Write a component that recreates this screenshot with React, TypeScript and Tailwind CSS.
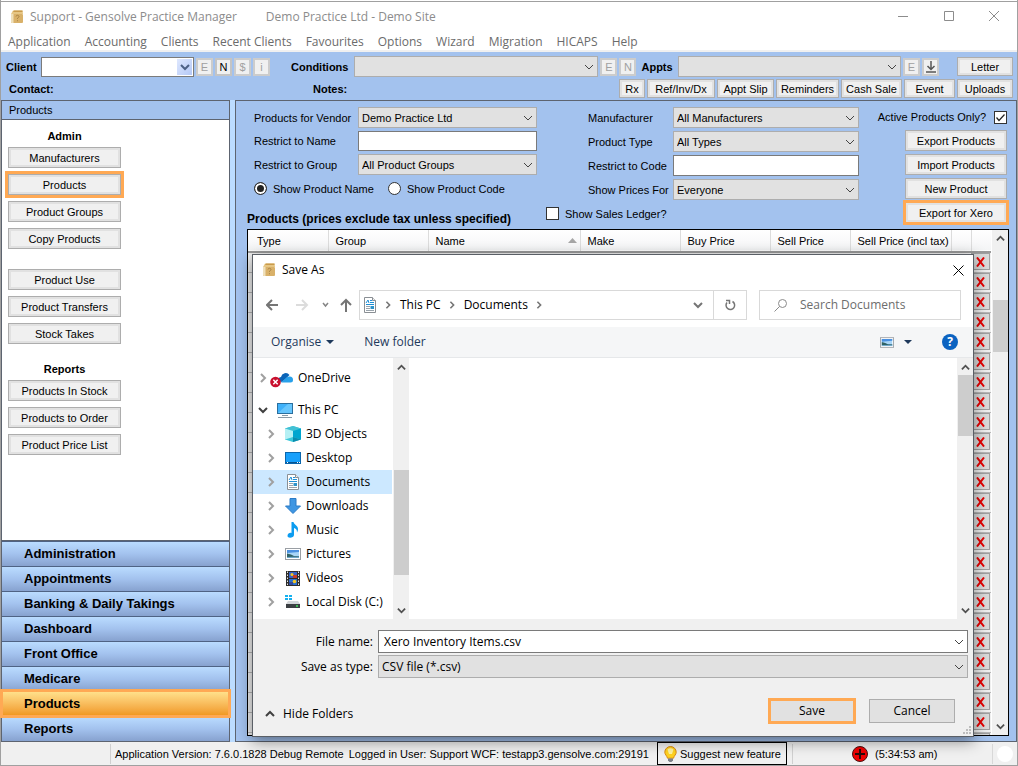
import { useState } from "react";
import type { ReactNode } from "react";
import clsx from "clsx";

const MENU = ["Application", "Accounting", "Clients", "Recent Clients", "Favourites", "Options", "Wizard", "Migration", "HICAPS", "Help"];

const SIDE_GROUPS = [
  { title: "Admin", items: ["Manufacturers", "Products", "Product Groups", "Copy Products"] },
  { items: ["Product Use", "Product Transfers", "Stock Takes"] },
  { title: "Reports", items: ["Products In Stock", "Products to Order", "Product Price List"] },
];

const NAV = ["Administration", "Appointments", "Banking & Daily Takings", "Dashboard", "Front Office", "Medicare", "Products", "Reports"];

const COLUMNS = [
  { label: "Type", width: "w-[80px]" },
  { label: "Group", width: "w-[100px]" },
  { label: "Name", width: "w-[152px]", sorted: true },
  { label: "Make", width: "w-[100px]" },
  { label: "Buy Price", width: "w-[90px]" },
  { label: "Sell Price", width: "w-[80px]" },
  { label: "Sell Price (incl tax)", width: "w-[101px]" },
  { label: "", width: "w-[20px]" },
  { label: "", width: "w-[20px]" },
];

const ROWS = Array.from({ length: 25 }, (_, i) => i);

const CHEVRONS = {
  down: "M1 3l4 4 4-4",
  up: "M1 7l4-4 4 4",
  right: "M3 1l4 4-4 4",
};

function Chevron({
  className = "",
  size = "size-[10px]",
  dir = "down",
  weight = 1,
}: {
  className?: string;
  size?: string;
  dir?: "down" | "up" | "right";
  weight?: number;
}) {
  return (
    <svg viewBox="0 0 10 10" className={clsx("shrink-0", size, className)} fill="none" stroke="currentColor" strokeWidth={weight}>
      <path d={CHEVRONS[dir]} />
    </svg>
  );
}

function Button({ children, className = "", highlight = false }: { children: ReactNode; className?: string; highlight?: boolean }) {
  return (
    <button
      type="button"
      className={clsx(
        "shrink-0 whitespace-nowrap border border-[#adadad] bg-[#f0f0f0] text-center shadow-[inset_0_0_0_2px_#e1e1e1]",
        highlight && "outline-3 outline-[#ffa954]",
        className
      )}
    >
      {children}
    </button>
  );
}

function MiniButton({ children, label, active = false }: { children: ReactNode; label: string; active?: boolean }) {
  return (
    <button
      type="button"
      aria-label={label}
      disabled={!active}
      className={clsx(
        "flex h-[18px] w-[17px] shrink-0 items-center justify-center border-2 bg-[#f0f0f0]",
        active ? "border-[#c4c4c4] text-black" : "border-[#cccccc] text-[#a0a0a0]"
      )}
    >
      {children}
    </button>
  );
}

function Combo({ id, options, className = "h-[21px]" }: { id: string; options: string[]; className?: string }) {
  return (
    <div className={clsx("relative", className)}>
      <select id={id} className="block size-full appearance-none border border-[#adadad] bg-[#e1e1e1] px-[3px]">
        {options.map((o) => (
          <option key={o}>{o}</option>
        ))}
      </select>
      <Chevron className="pointer-events-none absolute right-[4px] top-1/2 -translate-y-1/2 text-[#444]" />
    </div>
  );
}

function BoxIcon() {
  return (
    <svg viewBox="0 0 14 14" className="size-[14px] shrink-0">
      <path d="M1 4l2-3.500h9.500L13 4z" fill="#e6c684" />
      <path d="M4 .5h8.500v1.500H3z" fill="#c99b4c" />
      <rect x="1" y="4" width="12" height="9" rx="1" fill="#d9b169" />
      <path d="M1 4h2.500v9H2a1 1 0 01-1-1z" fill="#efe0bb" />
      <path d="M6 6.500q.2-1.200 1.500-1.200t1.500 1.200q0 .8-1.500 1.700v.8M7.500 10.200v1" stroke="#a98446" fill="none" />
    </svg>
  );
}

function DocumentIcon() {
  return (
    <svg viewBox="0 0 16 16" className="size-4 shrink-0">
      <path d="M2.500 .5h8l3 3v12h-11z" fill="#fff" stroke="#8a8f94" />
      <path d="M10.500 .5v3h3" fill="#eee" stroke="#8a8f94" />
      <path d="M4 6l2-3 1 3M8 3.500h2M8 5.500h4M4 7.500h8" stroke="#1f8fd6" fill="none" />
      <path d="M4 9.500h4M4 11.500h4M4 13.500h8" stroke="#9aa3ab" />
      <rect x="8.500" y="9" width="3.500" height="3" fill="#2e93c9" />
    </svg>
  );
}

function PictureIcon({ className = "h-3 w-4" }: { className?: string }) {
  return (
    <svg viewBox="0 0 16 12" className={clsx("shrink-0", className)}>
      <rect x=".5" y=".5" width="15" height="11" fill="#fff" stroke="#9a9fa4" />
      <rect x="2" y="2" width="12" height="8" fill="#a9d6f7" />
      <path d="M2 2h12v2L2 5z" fill="#4a90e0" />
      <path d="M2 5.500l4 1 3 1.500h5v1H2z" fill="#2f6266" />
      <path d="M2 9l12-.5V10H2z" fill="#6fa8c9" />
    </svg>
  );
}

function TreeIcon({ name }: { name: string }) {
  if (name === "Documents") return <DocumentIcon />;
  if (name === "Pictures") return <PictureIcon />;
  return (
    <svg viewBox="0 0 16 16" className="size-4 shrink-0 overflow-visible">
      {name === "OneDrive" && (
        <>
          <path d="M1 11a3.500 3.500 0 013-4 4.800 4.800 0 018.500-2l-4 4L5 12z" fill="#0a64b8" />
          <path d="M4 12.500l5-4.500a4 4 0 013.500-1.500A3.400 3.400 0 0116 10q0 2.500-2.500 2.500z" fill="#28a0ea" />
          <circle cx="-1.500" cy="12" r="5.300" fill="#c8102e" />
          <path d="M-3.700 9.800l4.400 4.400M.7 9.800l-4.400 4.400" stroke="#fff" strokeWidth="1.500" />
        </>
      )}
      {name === "This PC" && (
        <>
          <rect x=".5" y="1.500" width="15" height="10" fill="#3fb1fa" stroke="#2b6f9e" />
          <path d="M1 11L11 2h4v9z" fill="#67c6fd" />
          <path d="M5 13.500h6M1 15.500h14" stroke="#8a9aa6" />
        </>
      )}
      {name === "3D Objects" && (
        <>
          <path d="M0 2.500L8 0l8 2.500v11L8 16l-8-2.500z" fill="#3cc8da" />
          <path d="M0 2.500L8 0l8 2.500L8 5z" fill="#42c0d4" />
          <path d="M0 2.500L8 5v6l-8 2.500z" fill="#b5f0f4" />
          <path d="M16 2.500L8 5v6l8 2.500z" fill="#00a6cf" />
          <path d="M8 11l8 2.500L8 16z" fill="#0b8cae" />
        </>
      )}
      {name === "Desktop" && (
        <>
          <rect x=".5" y="2.500" width="15" height="11" fill="#18a0fb" stroke="#0a66ad" />
          <path d="M1 12.500h14" stroke="#0b5590" />
          <path d="M2 12.500h1M12 12.500h1M14 12.500h1" stroke="#fff" />
        </>
      )}
      {name === "Downloads" && <path d="M5 .5h6V8h4.500L8 15.500.5 8H5z" fill="#3f96e2" stroke="#2a7bc6" />}
      {name === "Music" && (
        <path d="M6.500 0h2c.5 3 4.500 3.500 4.500 7 0 1.500-.5 2.500-1 3.500.2-3-1.500-4-3-4.500v7c0 3-6.500 4-6.500.8 0-2.300 2.500-3.300 4-2.800z" fill="#0c9cf0" />
      )}
      {name === "Videos" && (
        <>
          <rect x="1" y="1" width="14" height="15" fill="#2c2c2c" />
          <path d="M2.500 1.500v14M13.500 1.500v14" stroke="#e8e8e8" strokeDasharray="1.500 1.500" />
          <rect x="4" y="2" width="8" height="6" fill="#3561c4" />
          <rect x="4" y="9" width="8" height="6" fill="#2b6fce" />
          <circle cx="7" cy="4.500" r="1.500" fill="#f3c623" />
          <path d="M8 5h4v3H8z" fill="#c43c28" />
          <circle cx="9.500" cy="11.500" r="1.800" fill="#f3c623" />
          <path d="M4 12h4v3H4z" fill="#344a9a" />
        </>
      )}
      {name === "Local Disk (C:)" && (
        <>
          <path d="M0 1h3v2H0zM4 1h3v2H4zM0 4h3v2H0zM4 4h3v2H4z" fill="#15b1f0" />
          <path d="M3 7h10l2 3H1z" fill="#d3d6d9" />
          <rect x="1" y="10" width="14" height="4" fill="#3b3f42" />
          <path d="M11 12h2" stroke="#3ee05a" strokeWidth="1.500" />
        </>
      )}
    </svg>
  );
}

function TopBar() {
  return (
    <div className="bg-[#a3c2ee] pb-[2px] pl-[5px] pr-[4px] pt-[4px]">
      <div className="flex h-[21px] items-center">
        <label htmlFor="client" className="w-[35px] shrink-0 font-bold">Client</label>
        <div className="relative h-[20px] w-[153px] shrink-0">
          <input id="client" className="block size-full border border-[#7b7b7b] bg-white px-1" />
          <span className="pointer-events-none absolute inset-y-[2px] right-[2px] flex w-[15px] items-center justify-center bg-linear-to-br from-[#dfe8fe] to-[#b4c8f6] text-[#4d6185]">
            <Chevron weight={2} />
          </span>
        </div>
        <div className="ml-[2px] flex gap-[2px]">
          <MiniButton label="Edit client">E</MiniButton>
          <MiniButton label="New client" active>N</MiniButton>
          <MiniButton label="Client account">$</MiniButton>
          <MiniButton label="Client info">i</MiniButton>
        </div>
        <label htmlFor="conditions" className="ml-[21px] w-[63px] shrink-0 font-bold">Conditions</label>
        <Combo id="conditions" options={[""]} className="h-[21px] min-w-0 grow basis-[245px]" />
        <div className="ml-[2px] flex gap-[2px]">
          <MiniButton label="Edit condition">E</MiniButton>
          <MiniButton label="New condition">N</MiniButton>
        </div>
        <label htmlFor="appts" className="ml-[5px] w-[37px] shrink-0 font-bold">Appts</label>
        <Combo id="appts" options={[""]} className="h-[21px] min-w-0 grow basis-[223px]" />
        <div className="ml-[2px] flex gap-[2px]">
          <MiniButton label="Edit appointment">E</MiniButton>
          <MiniButton label="Download">
            <svg viewBox="0 0 12 12" className="size-3 shrink-0" fill="none" stroke="#555" strokeWidth="1.500">
              <path d="M6 0v8M2.500 5L6 8.500 9.500 5M1 11h10" />
            </svg>
          </MiniButton>
        </div>
        <Button className="ml-[18px] h-[19px] w-[56px]">Letter</Button>
      </div>
      <div className="mt-[2px] flex h-[19px] items-center">
        <strong className="ml-[3px] w-[304px] shrink-0">Contact:</strong>
        <strong>Notes:</strong>
        <div className="ml-auto flex gap-[2px]">
          <Button className="h-[19px] w-[26px]">Rx</Button>
          <Button className="h-[19px] w-[68px]">Ref/Inv/Dx</Button>
          <Button className="h-[19px] w-[57px]">Appt Slip</Button>
          <Button className="h-[19px] w-[63px]">Reminders</Button>
          <Button className="h-[19px] w-[61px]">Cash Sale</Button>
          <Button className="h-[19px] w-[51px]">Event</Button>
          <Button className="h-[19px] w-[56px]">Uploads</Button>
        </div>
      </div>
    </div>
  );
}

function Sidebar() {
  return (
    <aside className="flex w-[229px] shrink-0 flex-col border border-[#5d6470] bg-white">
      <h2 className="h-[19px] border-b border-[#5d6470] bg-[#a3c2ee] pl-[7px] leading-[19px]">Products</h2>
      <div className="min-h-0 flex-1 overflow-hidden pl-[6px] pt-[7px]">
        {SIDE_GROUPS.map((group, i) => (
          <div key={i} className={clsx("flex w-[113px] flex-col gap-[6px]", i === 1 && "mt-[20px]", i === 2 && "mt-[16px]")}>
            {group.title && <h3 className="-mb-[4px] h-[18px] text-center font-bold leading-[18px]">{group.title}</h3>}
            {group.items.map((item) => (
              <Button key={item} className="h-[21px] w-full" highlight={item === "Products"}>
                {item}
              </Button>
            ))}
          </div>
        ))}
      </div>
      <nav className="border-t border-[#5d6470]">
        {NAV.map((item) => (
          <button
            key={item}
            type="button"
            className={clsx(
              "block h-[25px] w-full border-t border-[#4f6384] pl-[22px] text-left text-[13px] font-bold",
              item === "Products"
                ? "relative bg-linear-to-b from-[#ffe08a] to-[#ef9618] outline-3 -outline-offset-1 outline-[#ffa954]"
                : "bg-linear-to-b from-[#badcff] via-[#a3c2ee] to-[#87a2cf]"
            )}
          >
            {item}
          </button>
        ))}
      </nav>
    </aside>
  );
}

function Filters() {
  const [activeOnly, setActiveOnly] = useState(true);
  const radio = "size-[13px] appearance-none rounded-full border border-[#333] bg-white checked:bg-[#222] checked:shadow-[inset_0_0_0_2px_white]";
  return (
    <div className="flex items-start">
      <div>
        <div className="flex gap-[51px] pl-[7px]">
          <div className="grid grid-cols-[104px_179px] content-start items-center gap-y-[3px]">
            <label htmlFor="vendor">Products for Vendor</label>
            <Combo id="vendor" options={["Demo Practice Ltd"]} />
            <label htmlFor="name">Restrict to Name</label>
            <input id="name" className="h-[20px] border border-[#7a7a7a] bg-white px-1" />
            <label htmlFor="group">Restrict to Group</label>
            <Combo id="group" options={["All Product Groups"]} />
            <div className="col-span-2 flex h-[21px] items-center">
              <label className="flex w-[134px] items-center gap-[6px]">
                <input type="radio" name="show" defaultChecked className={radio} />
                Show Product Name
              </label>
              <label className="flex items-center gap-[6px]">
                <input type="radio" name="show" className={radio} />
                Show Product Code
              </label>
            </div>
          </div>
          <div className="grid grid-cols-[85px_186px] items-center gap-y-[3px]">
            <label htmlFor="manufacturer">Manufacturer</label>
            <Combo id="manufacturer" options={["All Manufacturers"]} />
            <label htmlFor="type">Product Type</label>
            <Combo id="type" options={["All Types"]} />
            <label htmlFor="code">Restrict to Code</label>
            <input id="code" className="h-[21px] border border-[#7a7a7a] bg-white px-1" />
            <label htmlFor="prices">Show Prices For</label>
            <Combo id="prices" options={["Everyone"]} />
          </div>
        </div>
        <div className="mt-[7px] flex h-[22px]">
          <h2 className="w-[299px] self-end text-[12px] font-bold leading-[20px]">Products (prices exclude tax unless specified)</h2>
          <label className="flex h-[13px] items-center gap-[6px]">
            <input type="checkbox" className="size-[13px] appearance-none border border-[#333] bg-white" />
            Show Sales Ledger?
          </label>
        </div>
      </div>
      <div className="ml-auto flex flex-col items-end gap-[3px] pr-[2px]">
        <label className="flex h-[20px] items-center gap-[8px] whitespace-nowrap">
          Active Products Only?
          <span className="relative flex">
            <input
              type="checkbox"
              checked={activeOnly}
              onChange={(e) => setActiveOnly(e.target.checked)}
              className="size-[13px] appearance-none border border-[#333] bg-white"
            />
            {activeOnly && (
              <svg viewBox="0 0 13 13" className="pointer-events-none absolute inset-0 size-[13px]" fill="none" stroke="#222" strokeWidth="1.200">
                <path d="M2.500 6.500L5 9.500l5.500-6" />
              </svg>
            )}
          </span>
        </label>
        <Button className="h-[21px] w-[102px]">Export Products</Button>
        <Button className="h-[21px] w-[102px]">Import Products</Button>
        <Button className="h-[21px] w-[102px]">New Product</Button>
        <Button className="h-[21px] w-[102px] -outline-offset-1" highlight>Export for Xero</Button>
      </div>
    </div>
  );
}

function ProductGrid() {
  return (
    <div className="flex h-full border border-black bg-[#f0f0f0]">
      <div className="min-w-0 flex-1 overflow-hidden">
        <table className="w-full table-fixed border-collapse">
          <thead>
            <tr className="h-[22px] border-b-2 border-[#9a9a9a] bg-linear-to-b from-white to-[#f4f5f6]">
              {COLUMNS.map((col, i) => (
                <th key={i} className={clsx("whitespace-nowrap border-r border-[#dcdcdc] p-0 pl-[7px] text-left font-normal first:pl-[9px]", col.width)}>
                  <span className="flex items-center justify-between pr-[3px]">
                    {col.label}
                    {col.sorted && <svg viewBox="0 0 9 5" className="h-[5px] w-[9px]"><path d="M0 5l4.500-5L9 5z" fill="#a6a6a6" /></svg>}
                  </span>
                </th>
              ))}
            </tr>
          </thead>
          <tbody>
            {ROWS.map((row) => (
              <tr key={row} className="h-[20px] border-b border-[#b8b8b8]">
                <td colSpan={8} className="p-0" />
                <td className="p-0 pb-px">
                  <button type="button" aria-label="Delete product" className="flex h-[17px] w-[19px] items-center justify-center border border-[#a0a0a0] bg-[#dadada]">
                    <svg viewBox="0 0 10 10" className="size-[10px]" stroke="#e80000" strokeWidth="2">
                      <path d="M1 .5l7 9M8 .5l-7 9" />
                    </svg>
                  </button>
                </td>
              </tr>
            ))}
          </tbody>
        </table>
      </div>
      <div className="flex w-[17px] shrink-0 flex-col items-center border-l border-white text-[#505050]">
        <Chevron dir="up" weight={2} size="size-[9px]" className="mt-[4px]" />
        <div className="mt-[57px] h-[52px] w-[15px] bg-[#cdcdcd]" />
        <Chevron weight={2} size="size-[9px]" className="mb-[4px] mt-auto" />
      </div>
    </div>
  );
}

function TreeItem({ name, level = 1, open = false, selected = false }: { name: string; level?: number; open?: boolean; selected?: boolean }) {
  return (
    <li className={clsx("flex h-[24px] items-center", level === 0 ? "pl-[5px]" : "pl-[13px]", selected && "bg-[#cce8ff]")}>
      <Chevron dir={open ? "down" : "right"} weight={2} className={open ? "text-[#404040]" : "text-[#a0a0a0]"} />
      <span className="ml-[9px] mr-[5px]">
        <TreeIcon name={name} />
      </span>
      {name}
    </li>
  );
}

function SaveDialog() {
  const [fileName, setFileName] = useState("Xero Inventory Items.csv");
  return (
    <section
      role="dialog"
      aria-label="Save As"
      className="absolute -bottom-px left-[5px] right-[35px] top-[25px] flex flex-col border border-[#5a5f66] bg-white font-['Open_Sans',sans-serif] text-[12px] shadow-[0_4px_14px_rgba(0,0,0,0.45)]"
    >
      <header className="flex h-[30px] shrink-0 items-center gap-[6px] pl-[9px] pr-[9px]">
        <BoxIcon />
        Save As
        <button type="button" aria-label="Close" className="ml-auto">
          <svg viewBox="0 0 11 11" className="size-[11px]" stroke="#000"><path d="M.5 .5l10 10M10.500 .5l-10 10" /></svg>
        </button>
      </header>
      <div className="mt-[5px] flex h-[30px] shrink-0 pl-[13px] pr-[12px]">
        <div className="flex w-[93px] shrink-0 items-center">
          <svg viewBox="0 0 93 14" className="h-[14px] w-[93px]" fill="none" strokeWidth="2">
            <path d="M12 7H1M6 2L1 7l5 5" stroke="#757575" />
            <path d="M30 7h11M36 2l5 5-5 5" stroke="#dcdcdc" />
            <path d="M57 5l2.500 3L62 5" stroke="#858585" strokeWidth="1.500" />
            <path d="M80 14V2M75 7l5-5 5 5" stroke="#757575" />
          </svg>
        </div>
        <div className="flex min-w-0 flex-1 items-center border border-[#d9d9d9] pl-[2px]">
          <DocumentIcon />
          <Chevron dir="right" weight={2} size="size-[8px]" className="ml-[6px] text-[#757575]" />
          <a href="#pc" className="ml-[8px]">This PC</a>
          <Chevron dir="right" weight={2} size="size-[8px]" className="ml-[7px] text-[#757575]" />
          <a href="#docs" className="ml-[8px]">Documents</a>
          <Chevron dir="right" weight={2} size="size-[8px]" className="ml-[7px] text-[#757575]" />
          <Chevron weight={2} className="ml-auto mr-[10px] text-[#757575]" />
        </div>
        <button type="button" aria-label="Refresh" className="flex w-[33px] items-center justify-center border border-l-0 border-[#d9d9d9]">
          <svg viewBox="0 0 12 12" className="size-3" fill="none" stroke="#757575" strokeWidth="1.500">
            <path d="M8.500 2.500A4.300 4.300 0 113 3.500" />
            <path d="M2 1.500h3.500V5" />
          </svg>
        </button>
        <label className="ml-[12px] flex w-[202px] items-center border border-[#d9d9d9] pl-[14px]">
          <svg viewBox="0 0 13 13" className="size-[13px] shrink-0" fill="none" stroke="#8a8a8a">
            <circle cx="8.500" cy="4.500" r="4" />
            <path d="M5.500 7.500L.5 12.500" />
          </svg>
          <input type="text" aria-label="Search Documents" placeholder="Search Documents" className="ml-[13px] min-w-0 flex-1 outline-none placeholder:text-[#6d6d6d]" />
        </label>
      </div>
      <div className="mt-[7px] flex h-[31px] shrink-0 items-center border-b border-[#e6e8ea] bg-[#f5f6f7] pl-[18px] pr-[15px] text-[#1e395b]">
        <button type="button" className="flex items-center gap-[5px]">
          Organise
          <svg viewBox="0 0 8 4" className="h-1 w-2"><path d="M0 0h8L4 4z" fill="currentColor" /></svg>
        </button>
        <button type="button" className="ml-[30px]">New folder</button>
        <button type="button" aria-label="Change view" className="ml-auto flex items-center gap-[10px]">
          <PictureIcon className="h-[11px] w-[14px]" />
          <svg viewBox="0 0 8 4" className="h-1 w-2"><path d="M0 0h8L4 4z" fill="currentColor" /></svg>
        </button>
        <button type="button" aria-label="Help" className="ml-[30px] flex size-4 items-center justify-center rounded-full bg-[#0b63c1] font-bold text-white">?</button>
      </div>
      <div className="flex min-h-0 flex-1">
        <ul className="w-[139px] shrink-0 overflow-hidden whitespace-nowrap pt-[8px]">
          <TreeItem name="OneDrive" level={0} />
          <li className="h-[8px]" aria-hidden="true" />
          <TreeItem name="This PC" level={0} open />
          {["3D Objects", "Desktop", "Documents", "Downloads", "Music", "Pictures", "Videos", "Local Disk (C:)"].map((name) => (
            <TreeItem key={name} name={name} selected={name === "Documents"} />
          ))}
        </ul>
        <div className="ml-px flex w-[16px] shrink-0 flex-col items-center bg-[#f0f0f0] text-[#505050]">
          <Chevron dir="up" weight={2} size="size-[9px]" className="mt-[5px]" />
          <div className="mt-[98px] h-[105px] w-[15px] bg-[#cdcdcd]" />
          <Chevron weight={2} size="size-[9px]" className="mb-[4px] mt-auto" />
        </div>
        <div className="flex-1" />
        <div className="flex w-[16px] shrink-0 flex-col items-center bg-[#f0f0f0] text-[#505050]">
          <Chevron dir="up" weight={2} size="size-[9px]" className="mt-[5px]" />
          <div className="mt-[3px] h-[61px] w-[15px] bg-[#cdcdcd]" />
          <Chevron weight={2} size="size-[9px]" className="mb-[4px] mt-auto" />
        </div>
      </div>
      <footer className="shrink-0 bg-[#f0f0f0] pb-[12px] pt-[11px]">
        <div className="grid grid-cols-[120px_1fr] items-center gap-x-[5px] gap-y-[2px] pr-[5px]">
          <label htmlFor="filename" className="text-right">File name:</label>
          <div className="relative h-[23px]">
            <input
              id="filename"
              value={fileName}
              onChange={(e) => setFileName(e.target.value)}
              className="block size-full border border-[#7a7a7a] bg-white px-[5px]"
            />
            <Chevron className="pointer-events-none absolute right-[4px] top-[7px] text-[#444]" />
          </div>
          <label htmlFor="filetype" className="text-right">Save as type:</label>
          <Combo id="filetype" options={["CSV file (*.csv)"]} className="h-[23px]" />
        </div>
        <div className="mt-[20px] flex items-center pl-[12px] pr-[18px]">
          <button type="button" className="mt-[5px] flex items-center gap-[8px]">
            <Chevron dir="up" weight={2} className="text-[#404040]" />
            Hide Folders
          </button>
          <button type="button" className="ml-auto h-[26px] w-[88px] border-3 border-[#ffa954] bg-[#e1e1e1]">Save</button>
          <button type="button" className="ml-[13px] h-[24px] w-[86px] border border-[#adadad] bg-[#e1e1e1]">Cancel</button>
        </div>
      </footer>
      <svg viewBox="0 0 8 8" className="absolute bottom-[2px] right-[2px] size-2" fill="#bdbdbd">
        <path d="M6 0h2v2H6zM3 3h2v2H3zM6 3h2v2H6zM0 6h2v2H0zM3 6h2v2H3zM6 6h2v2H6z" />
      </svg>
    </section>
  );
}

function StatusBar() {
  return (
    <footer className="flex h-[24px] shrink-0 items-center border-b border-[#a0a0a0] bg-[#f0f0f0] pl-[109px]">
      <span className="whitespace-nowrap border-l border-[#d0d0d0] pl-[4px] leading-[20px]">Application Version: 7.6.0.1828 Debug Remote</span>
      <span className="ml-[5px] whitespace-nowrap">Logged in User: Support WCF: testapp3.gensolve.com:29191</span>
      <button type="button" className="ml-auto flex h-[23px] w-[130px] shrink-0 items-center gap-[3px] whitespace-nowrap border border-black pl-[6px]">
        <svg viewBox="0 0 13 16" className="h-4 w-[13px] shrink-0">
          <path d="M6.500 .5a5.700 5.700 0 015.700 5.700c0 2.300-2 3.300-2.700 6h-6c-.7-2.700-2.700-3.700-2.700-6A5.700 5.700 0 016.500 .5z" fill="#ffd21f" stroke="#d98a12" />
          <path d="M3.500 3.500a4 4 0 016 0L8 8H5z" fill="#fff3a0" />
          <path d="M4 12.500h5v2l-1.500 1.500h-2L4 14.500z" fill="#7c8088" />
        </svg>
        Suggest new feature
      </button>
      <div className="ml-[5px] flex h-[20px] w-[200px] shrink-0 items-center border-l border-[#d0d0d0] pl-[59px]">
        <svg viewBox="0 0 16 16" className="size-4">
          <circle cx="8" cy="8" r="7.500" fill="#f00000" stroke="#4a1010" />
          <path d="M8 3v10M3 8h10" stroke="#2a0a0a" strokeWidth="2" />
        </svg>
        <span className="ml-[7px]">(5:34:53 am)</span>
      </div>
      <div className="flex h-[20px] w-[25px] shrink-0 items-center border-l border-[#d8d8d8] pl-[4px]">
        <span className="size-4 rounded-full bg-white" />
      </div>
    </footer>
  );
}

export default function App() {
  return (
    <div className="flex h-screen min-h-[640px] min-w-[1000px] flex-col border-l border-r border-[#a0a0a0] bg-white pt-px font-['Liberation_Sans',Arial,sans-serif] text-[11px] leading-[14px] text-black">
      <header className="border-t border-[#a0a0a0] font-['Open_Sans',sans-serif] text-[12px] text-[#6b6b6b]">
        <div className="flex h-[30px] items-center pl-[9px] text-[#8c8c8c]">
          <BoxIcon />
          <h1 className="ml-[6px]">Support - Gensolve Practice Manager</h1>
          <span className="ml-[29px]">Demo Practice Ltd - Demo Site</span>
          <div className="ml-auto flex w-[119px] items-center justify-between pb-[2px] pr-[18px]">
            <button type="button" aria-label="Minimise"><svg viewBox="0 0 10 10" className="size-[10px]" stroke="currentColor"><path d="M0 5.500h10" /></svg></button>
            <button type="button" aria-label="Maximise"><svg viewBox="0 0 10 10" className="size-[10px]" stroke="currentColor" fill="none"><path d="M.5 .5h9v9h-9z" /></svg></button>
            <button type="button" aria-label="Close"><svg viewBox="0 0 10 10" className="size-[10px]" stroke="currentColor"><path d="M0 0l10 10M10 0L0 10" /></svg></button>
          </div>
        </div>
        <nav className="flex h-[20px] items-center gap-[14px] border-b-2 border-[#f0f0f0] pl-[7px] pt-[2px]">
          {MENU.map((item) => (
            <button key={item} type="button">{item}</button>
          ))}
        </nav>
      </header>
      <TopBar />
      <div className="flex min-h-0 flex-1 gap-[5px] bg-[#bcdcff]">
        <Sidebar />
        <main className="flex min-w-0 flex-1 flex-col border border-[#5d6470] bg-[#a3c2ee] pb-[5px] pl-[11px] pr-[7px] pt-[6px]">
          <Filters />
          <div className="relative min-h-0 flex-1">
            <ProductGrid />
            <SaveDialog />
          </div>
        </main>
      </div>
      <StatusBar />
    </div>
  );
}
